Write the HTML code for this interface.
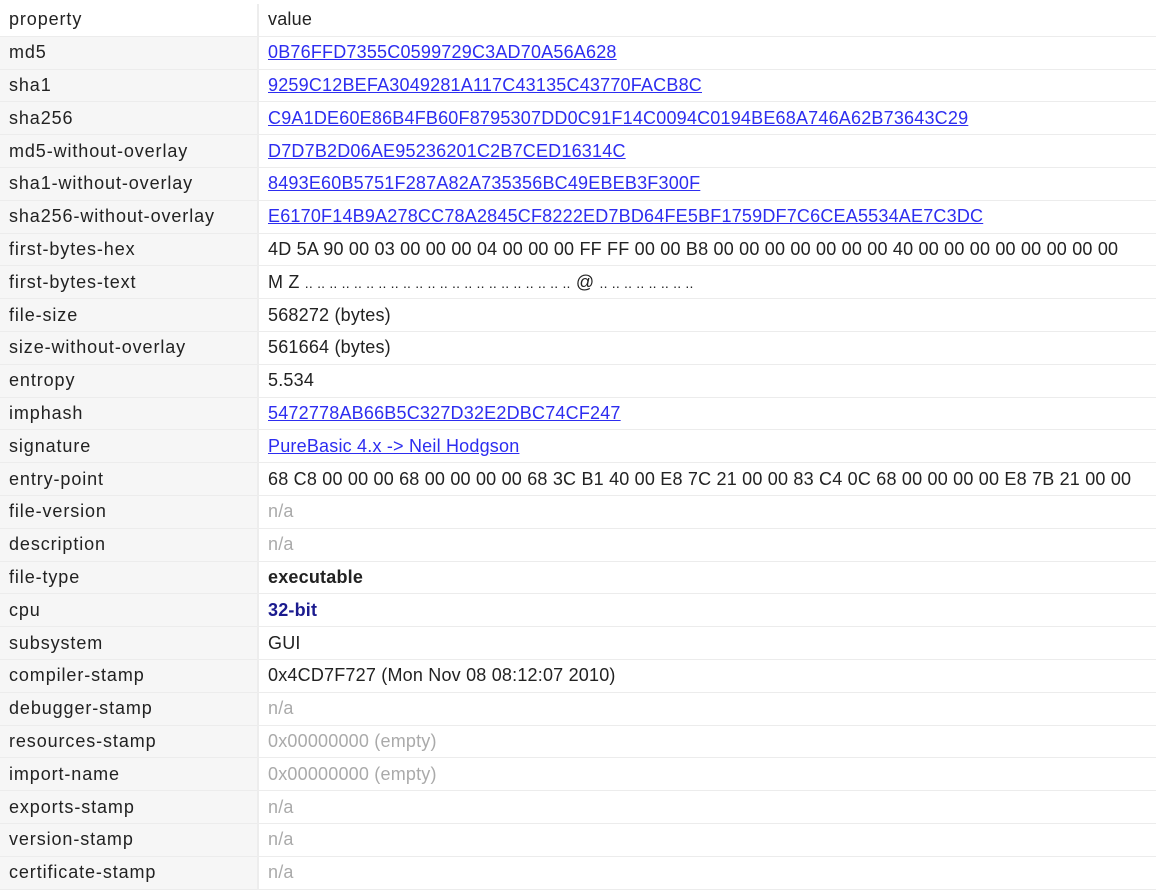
<!DOCTYPE html>
<html><head><meta charset="utf-8"><style>
body{margin:0;background:#fff;font-family:"Liberation Sans",sans-serif;font-size:18px;color:#222;width:1156px;height:892px;overflow:hidden}
table{border-collapse:collapse;position:absolute;top:4px;left:0;width:1156px}
td{height:31.8px;border-bottom:1px solid #ececec;padding:0;white-space:nowrap;vertical-align:middle}
td.k{width:248px;padding-left:9px;background:#f6f6f6;border-right:2px solid #ededed;letter-spacing:0.9px}
td.v{padding-left:9px;letter-spacing:0.2px}
tr.h td.k{background:#fff}
a{color:#2d2df0;text-decoration:underline}
.na{color:#aaa}
.b{font-weight:bold}
.cpu{font-weight:bold;color:#1b1b8f}
.d{font-size:14px}
</style></head><body>
<table>
<tr class="h"><td class="k">property</td><td class="v">value</td></tr>
<tr><td class="k">md5</td><td class="v"><a>0B76FFD7355C0599729C3AD70A56A628</a></td></tr>
<tr><td class="k">sha1</td><td class="v"><a>9259C12BEFA3049281A117C43135C43770FACB8C</a></td></tr>
<tr><td class="k">sha256</td><td class="v"><a>C9A1DE60E86B4FB60F8795307DD0C91F14C0094C0194BE68A746A62B73643C29</a></td></tr>
<tr><td class="k">md5-without-overlay</td><td class="v"><a>D7D7B2D06AE95236201C2B7CED16314C</a></td></tr>
<tr><td class="k">sha1-without-overlay</td><td class="v"><a>8493E60B5751F287A82A735356BC49EBEB3F300F</a></td></tr>
<tr><td class="k">sha256-without-overlay</td><td class="v"><a>E6170F14B9A278CC78A2845CF8222ED7BD64FE5BF1759DF7C6CEA5534AE7C3DC</a></td></tr>
<tr><td class="k">first-bytes-hex</td><td class="v">4D 5A 90 00 03 00 00 00 04 00 00 00 FF FF 00 00 B8 00 00 00 00 00 00 00 40 00 00 00 00 00 00 00 00</td></tr>
<tr><td class="k">first-bytes-text</td><td class="v">M Z <span class="d">.. .. .. .. .. .. .. .. .. .. .. .. .. .. .. .. .. .. .. .. .. ..</span> @ <span class="d">.. .. .. .. .. .. .. ..</span></td></tr>
<tr><td class="k">file-size</td><td class="v">568272 (bytes)</td></tr>
<tr><td class="k">size-without-overlay</td><td class="v">561664 (bytes)</td></tr>
<tr><td class="k">entropy</td><td class="v">5.534</td></tr>
<tr><td class="k">imphash</td><td class="v"><a>5472778AB66B5C327D32E2DBC74CF247</a></td></tr>
<tr><td class="k">signature</td><td class="v"><a>PureBasic 4.x -&gt; Neil Hodgson</a></td></tr>
<tr><td class="k">entry-point</td><td class="v">68 C8 00 00 00 68 00 00 00 00 68 3C B1 40 00 E8 7C 21 00 00 83 C4 0C 68 00 00 00 00 E8 7B 21 00 00</td></tr>
<tr><td class="k">file-version</td><td class="v na">n/a</td></tr>
<tr><td class="k">description</td><td class="v na">n/a</td></tr>
<tr><td class="k">file-type</td><td class="v b">executable</td></tr>
<tr><td class="k">cpu</td><td class="v cpu">32-bit</td></tr>
<tr><td class="k">subsystem</td><td class="v">GUI</td></tr>
<tr><td class="k">compiler-stamp</td><td class="v">0x4CD7F727 (Mon Nov 08 08:12:07 2010)</td></tr>
<tr><td class="k">debugger-stamp</td><td class="v na">n/a</td></tr>
<tr><td class="k">resources-stamp</td><td class="v na">0x00000000 (empty)</td></tr>
<tr><td class="k">import-name</td><td class="v na">0x00000000 (empty)</td></tr>
<tr><td class="k">exports-stamp</td><td class="v na">n/a</td></tr>
<tr><td class="k">version-stamp</td><td class="v na">n/a</td></tr>
<tr><td class="k">certificate-stamp</td><td class="v na">n/a</td></tr>
</table>
</body></html>
